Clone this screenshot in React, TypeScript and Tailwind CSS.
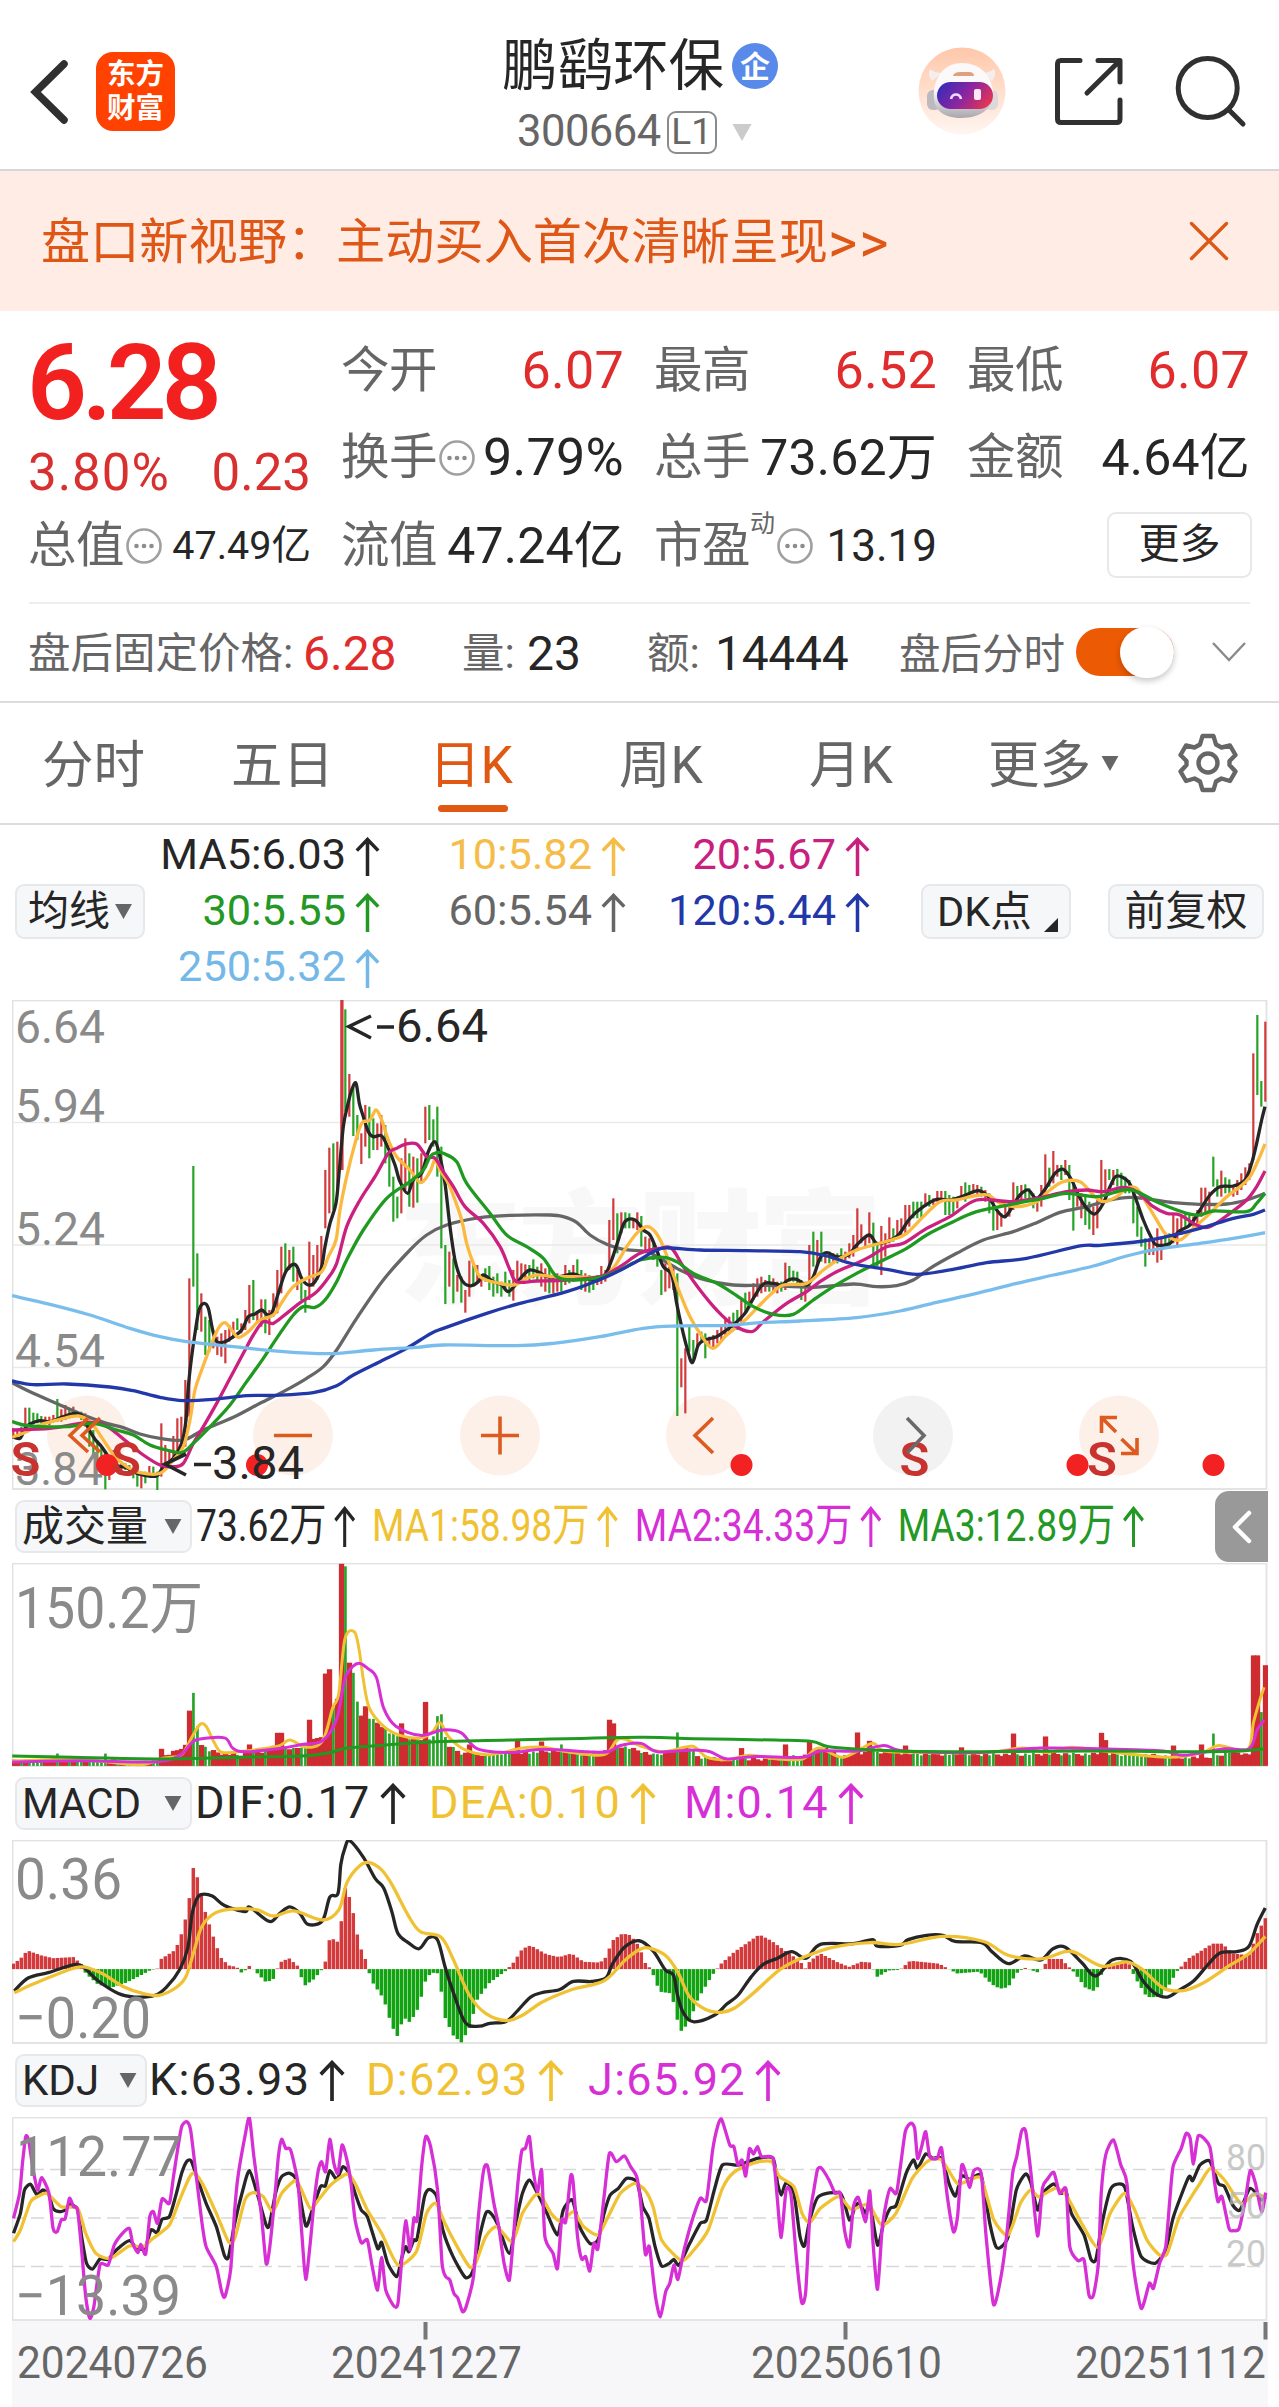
import type { ReactNode } from "react";

const UP = "#d23a3c";
const DOWN = "#27a327";
const INK = "#262626";
const GOLD = "#f0c233";
const PINK = "#d62fd6";

type Point = [number, number];

const parse = (data: string): Point[] =>
  data
    .trim()
    .split(/\s+/)
    .map((pair) => pair.split(",").map(Number) as Point);

// Catmull-Rom spline through the points, with a soft tension
const curve = (data: string, tension = 6) => {
  const p = parse(data);
  let d = `M${p[0][0]} ${p[0][1]}`;
  for (let i = 0; i < p.length - 1; i++) {
    const a = p[i - 1] ?? p[i];
    const b = p[i];
    const c = p[i + 1];
    const e = p[i + 2] ?? c;
    d += `C${b[0] + (c[0] - a[0]) / tension} ${b[1] + (c[1] - a[1]) / tension} ${
      c[0] - (e[0] - b[0]) / tension
    } ${c[1] - (e[1] - b[1]) / tension} ${c[0]} ${c[1]}`;
  }
  return d;
};

const lerp = (points: Point[], x: number) => {
  if (x <= points[0][0]) return points[0][1];
  for (let i = 1; i < points.length; i++) {
    if (x <= points[i][0]) {
      const [x0, y0] = points[i - 1];
      const [x1, y1] = points[i];
      return y0 + ((y1 - y0) * (x - x0)) / (x1 - x0);
    }
  }
  return points[points.length - 1][1];
};

// One entry per trading day: r = up, g = down, then high-low
const candles = `
r1345-1375 r1350-1378 g1340-1365 r1283-1345 g1283-1335 g1298-1330 g1300-1330 g1308-1335 r1310-1330 r1310-1335
r1305-1325 g1257-1325 r1288-1325 r1275-1320 g1290-1315 r1280-1310 g1295-1310 g1295-1320 r1300-1340 g1310-1400
g1350-1430 g1380-1450 g1400-1480 g1420-1528 r1440-1500 r1410-1465 g1430-1470 r1445-1475 g1450-1470 g1455-1475
g1465-1495 g1470-1520 r1475-1525 g1475-1510 r1458-1490 g1460-1490 g1475-1530 r1330-1490 r1395-1450 r1410-1440
r1368-1440 r1315-1430 r1310-1430 r1200-1400 r895-1310 g558-920 g820-1050 r940-1055 g1010-1125 g1020-1115
r1080-1105 r1070-1125 r1060-1130 r1050-1150 r1035-1085 r1025-1075 g1015-1050 r1030-1060 r990-1050 r915-1030
g900-1020 r1000-1030 r958-1040 g958-1060 r990-1065 r940-1010 r870-1000 r800-940 g790-880 r810-870
g800-905 r870-930 g900-960 g930-998 r785-960 r825-920 r795-900 r768-880 r570-745 r503-700
g490-690 r485-640 r60-570 g88-395 r282-410 g320-468 g405-480 r460-552 r375-500 g380-535
g415-510 r430-510 r405-500 g435-550 g510-620 g590-725 g650-715 r535-700 r475-630 g520-680
r530-683 g535-668 r520-610 r380-490 g375-480 g418-500 g380-590 g500-805 g795-972 r815-920
g835-970 r885-935 g890-968 r930-998 r842-950 g850-920 r855-905 r890-920 g865-905 g858-930
g890-950 g880-940 g905-950 g875-925 g900-950 r870-962 r842-900 r850-900 r853-895 g855-900
g838-895 g860-900 r850-920 r865-935 g860-940 r890-940 r880-935 g890-935 r855-915 g870-910
r855-905 g838-900 g870-930 r880-935 g885-938 g890-930 r885-915 r858-912 r870-905 r720-880
r655-780 g700-820 r697-760 g697-745 g700-745 r715-745 r697-750 g708-800 r770-815 r775-810
g790-840 g830-860 g870-945 r850-935 r860-925 r865-930 g880-1308 r1135-1222 r1105-1300 g1040-1115
g1080-1140 r1060-1100 g1055-1085 g1060-1135 r1070-1095 r1065-1105 r1050-1090 r1040-1080 r1015-1065 r1010-1060
g998-1045 g990-1050 r960-1030 g938-1000 r935-985 r910-960 r895-950 r890-940 r900-935 g885-935
r895-935 r905-940 g905-935 r848-930 g858-905 g872-905 g875-920 g900-960 r905-965 r795-930
g755-860 r780-850 g755-845 r820-850 g815-850 r820-850 g820-850 g805-845 r815-840 r790-835
r765-830 r685-810 r733-790 r770-800 r697-790 g728-855 g790-860 r738-885 r760-830 r712-790
g745-785 r720-770 r715-765 r675-760 r675-740 g665-715 g665-715 g665-712 r640-680 g645-680
r655-675 r633-665 r633-665 g633-705 g645-705 g650-700 r655-685 r618-660 g607-665 g615-650
r612-640 r615-645 g620-650 r630-665 g640-700 g660-752 r695-750 r700-740 r680-715 r665-710
r607-690 g618-665 r615-660 g613-655 g625-660 g640-685 r650-695 r615-680 r523-640 g563-620
r513-610 r555-590 g555-600 r540-585 g555-660 g610-752 r630-680 r640-715 g650-735 g665-748
r680-765 r660-745 r540-660 r568-640 g567-600 r570-615 g567-620 g578-625 g590-640 g600-640
g630-730 g680-770 g740-800 g775-860 r775-825 r780-825 r745-848 r770-840 g765-800 g760-800
r700-790 r715-795 r705-765 g700-740 g705-740 r710-740 r690-735 r623-710 r623-700 r635-690
g530-620 g598-650 r572-650 g592-640 g598-640 r620-650 r600-645 r580-630 r562-615 r550-600
r220-540 g105-345 g303-380 r125-365`
  .trim()
  .split(/\s+/)
  .map((item, i) => {
    const [top, bottom] = item.slice(1).split("-").map(Number);
    return { x: 40 + i * 12, top, bottom, up: item[0] === "r" };
  });

const averages = [
  {
    color: "#666666",
    data: "36,1208 100,1240 180,1275 250,1305 320,1330 370,1343 420,1362 480,1375 550,1380 610,1350 700,1312 780,1270 850,1235 920,1195 970,1160 1010,1110 1070,1015 1150,900 1230,810 1280,765 1340,735 1440,713 1530,706 1650,705 1690,710 1730,727 1770,765 1820,793 1870,808 1940,815 1980,835 2040,870 2100,895 2200,915 2300,916 2440,922 2560,912 2630,920 2690,917 2740,900 2790,865 2870,820 2950,780 3040,755 3110,728 3180,697 3260,680 3330,660 3390,652 3450,658 3520,668 3600,673 3680,672 3740,660 3795,640",
  },
  {
    color: INK,
    data: "36,1370 60,1375 75,1345 90,1332 120,1322 150,1325 190,1310 225,1300 250,1310 265,1345 285,1378 305,1400 325,1430 345,1455 380,1463 410,1480 430,1485 470,1488 490,1460 520,1435 545,1390 558,1320 565,1220 575,1130 585,1060 597,990 612,970 625,985 638,1050 650,1085 675,1085 700,1070 725,1050 745,1010 765,1002 785,990 800,1003 815,1000 835,940 855,880 875,855 890,858 905,895 925,915 945,905 965,860 975,800 990,730 1008,670 1018,570 1030,440 1042,380 1055,330 1068,310 1078,370 1090,410 1105,455 1120,470 1145,468 1165,505 1185,555 1200,605 1223,640 1240,600 1265,580 1285,515 1305,485 1320,530 1335,610 1350,740 1365,840 1380,890 1395,912 1415,917 1435,905 1450,885 1480,905 1505,915 1525,935 1550,910 1570,885 1590,870 1620,878 1640,890 1680,890 1720,882 1755,895 1790,902 1815,885 1835,840 1855,780 1875,725 1905,720 1930,750 1950,765 1970,810 1990,860 2015,885 2030,970 2045,1040 2060,1100 2077,1148 2095,1095 2115,1080 2150,1070 2180,1050 2205,1030 2235,1000 2260,955 2290,912 2320,910 2345,915 2365,900 2390,898 2420,915 2440,890 2460,835 2480,818 2510,830 2545,825 2570,795 2607,765 2630,790 2660,785 2695,765 2730,715 2770,680 2810,658 2850,660 2890,648 2935,632 2965,650 2990,690 3015,710 3040,675 3060,645 3085,630 3110,655 3140,620 3165,580 3190,568 3215,600 3235,645 3260,685 3285,702 3310,670 3330,620 3350,588 3385,605 3405,650 3430,720 3455,775 3470,795 3510,790 3535,755 3570,735 3600,690 3630,645 3660,620 3700,618 3735,600 3755,550 3770,490 3785,420 3795,380",
  },
  {
    color: "#fbb940",
    data: "36,1372 80,1355 120,1335 180,1318 235,1308 270,1325 290,1350 320,1395 345,1430 380,1460 420,1478 480,1480 520,1440 550,1400 570,1320 585,1230 605,1170 635,1090 655,1045 675,1028 695,1050 715,1072 745,1055 780,1020 820,1005 850,960 880,920 920,895 965,875 985,830 1008,780 1020,690 1040,590 1065,490 1085,430 1110,420 1128,390 1145,420 1165,480 1190,530 1230,570 1262,608 1290,575 1305,540 1320,570 1345,610 1365,660 1385,720 1400,790 1420,850 1440,890 1475,905 1540,915 1580,895 1610,885 1660,890 1730,890 1790,892 1820,885 1850,850 1880,800 1910,760 1940,740 1965,755 1990,800 2015,870 2040,940 2070,1010 2100,1060 2138,1105 2180,1065 2230,1025 2270,985 2310,945 2350,915 2420,910 2470,870 2520,835 2570,810 2620,795 2680,778 2720,760 2770,710 2820,665 2870,660 2920,648 2965,645 3000,670 3050,680 3110,665 3150,630 3190,605 3240,605 3280,645 3310,665 3350,650 3380,625 3410,625 3440,670 3470,720 3500,765 3540,780 3580,745 3630,700 3680,650 3720,620 3750,590 3775,540 3795,492",
  },
  {
    color: "#cc2080",
    data: "36,1350 150,1345 240,1330 290,1328 330,1345 380,1385 430,1425 480,1455 520,1460 550,1450 580,1390 610,1340 650,1270 690,1195 730,1120 760,1065 790,1025 820,1030 860,1000 905,965 945,940 980,900 1010,850 1040,740 1080,660 1125,590 1165,520 1190,505 1215,493 1250,492 1280,530 1305,535 1330,575 1360,620 1395,680 1450,730 1500,800 1530,870 1550,905 1610,903 1700,900 1800,890 1860,860 1920,820 1980,805 2015,805 2050,860 2100,930 2150,990 2200,1035 2255,1055 2290,1025 2360,970 2420,935 2460,905 2510,875 2570,850 2610,830 2660,800 2710,790 2780,745 2850,710 2930,660 3030,665 3110,655 3200,635 3260,630 3310,635 3370,622 3410,635 3460,680 3500,700 3540,705 3590,735 3630,740 3690,700 3740,660 3770,620 3795,573",
  },
  {
    color: "#1f991f",
    data: "36,1325 90,1338 200,1340 280,1330 350,1350 400,1365 450,1395 500,1410 545,1418 580,1390 640,1330 690,1275 740,1205 790,1135 840,1060 880,1005 910,980 945,982 975,960 1010,905 1040,840 1090,750 1160,655 1230,605 1270,570 1290,530 1310,518 1330,520 1370,545 1400,610 1470,700 1520,765 1580,800 1630,835 1670,890 1720,900 1800,892 1860,870 1920,840 1990,832 2030,845 2080,880 2150,910 2200,940 2260,980 2320,1003 2380,1003 2440,960 2500,920 2570,880 2640,845 2720,805 2780,765 2850,730 2930,695 3050,670 3130,655 3200,640 3290,650 3370,630 3410,635 3480,670 3560,700 3600,705 3640,693 3740,695 3770,670 3795,640",
  },
  {
    color: "#2338a8",
    data: "36,1203 100,1214 200,1212 330,1221 400,1232 480,1252 550,1262 640,1258 740,1247 830,1246 940,1238 1010,1217 1060,1185 1140,1145 1220,1105 1290,1062 1330,1045 1460,1000 1560,970 1700,935 1820,890 1900,850 1970,810 2010,804 2100,810 2240,812 2400,815 2480,828 2560,852 2660,868 2750,883 2850,870 2960,848 3080,835 3240,798 3300,796 3430,783 3500,770 3600,745 3700,715 3760,703 3795,690",
  },
  {
    color: "#78bdec",
    data: "36,947 150,973 270,1005 390,1045 480,1070 560,1085 700,1100 850,1115 990,1121 1120,1110 1250,1102 1330,1095 1550,1097 1660,1090 1800,1070 1930,1045 2030,1038 2180,1036 2280,1028 2400,1023 2570,1013 2700,993 2810,967 2930,940 3050,910 3160,885 3280,858 3380,828 3470,808 3600,790 3700,775 3795,758",
  },
];

const volumeBase = parse(
  "30,742 130,738 250,738 330,746 380,740 430,715 450,700 490,690 510,712 540,720 580,725 640,715 680,700 720,710 760,690 790,670 820,590 850,500 865,505 880,610 900,620 930,640 960,670 1000,680 1060,680 1080,650 1100,700 1130,720 1200,725 1250,715 1300,720 1370,715 1450,725 1480,715 1520,700 1570,715 1600,725 1690,705 1710,730 1780,740 1900,735 1980,725 2010,700 2060,730 2130,715 2250,722 2400,724 2600,722 2800,724 2950,735 3020,715 3060,725 3091,600",
);

const volumeSpikes = parse(
  "140,725 258,725 395,712 461,607 473,558 483,650 607,700 676,668 688,668 757,632 795,505 806,493 835,203 846,210 855,475 866,503 893,595 983,642 1040,583 1070,622 1080,617 1148,700 1268,690 1327,692 1375,700 1492,632 1503,642 1659,667 1816,710 1924,700 1982,690 2100,667 2131,690 2216,703 2355,708 2482,670 2560,678 2698,668 2709,688 2874,703 2943,700 2972,670 3070,455 3080,455 3098,482",
);

const volumeLines = [
  {
    color: GOLD,
    data: "30,745 200,742 340,756 400,738 445,728 470,680 490,645 505,650 525,695 545,722 600,718 680,705 710,688 750,708 790,690 815,600 830,560 845,410 868,390 880,440 890,520 905,600 940,650 980,675 1030,682 1060,665 1078,640 1100,680 1140,715 1200,728 1280,710 1330,708 1400,722 1480,728 1510,690 1530,685 1571,705 1626,720 1696,705 1731,735 1781,742 1836,730 1906,740 1966,740 2006,710 2066,735 2136,697 2166,718 2266,722 2416,722 2506,710 2566,722 2626,708 2716,720 2866,735 2946,722 2986,703 3056,715 3071,640 3086,580 3097,543",
  },
  {
    color: PINK,
    data: "30,748 200,745 380,748 440,730 470,695 490,685 550,682 570,710 600,720 680,712 740,700 790,690 825,630 845,520 865,485 882,477 900,490 922,515 940,600 970,650 1030,675 1085,660 1130,668 1170,712 1250,722 1330,713 1440,720 1490,720 1520,703 1571,697 1610,720 1700,715 1740,720 1781,740 1850,733 1966,735 2010,718 2100,718 2166,703 2216,718 2400,722 2550,710 2700,712 2850,718 2900,730 3000,712 3060,712 3080,660 3097,633",
  },
  {
    color: "#1f991f",
    data: "30,732 200,736 400,740 600,735 740,732 810,722 850,710 960,700 1080,692 1250,688 1566,680 1700,684 1900,688 1990,692 2040,708 2200,718 2400,720 2700,718 2900,720 3040,718 3097,712",
  },
];

const histogram = parse(
  "30,1305 50,1290 60,1275 70,1268 100,1280 130,1288 180,1285 200,1305 210,1330 240,1360 270,1370 310,1355 345,1335 370,1320 385,1318 395,1290 430,1265 450,1205 463,1130 474,1037 485,1070 500,1150 520,1220 540,1285 560,1308 580,1312 590,1328 603,1320 612,1308 622,1320 650,1352 668,1350 685,1300 708,1288 730,1310 745,1365 770,1345 788,1320 800,1290 808,1230 830,1245 846,1095 860,1130 880,1250 895,1290 910,1350 940,1400 960,1475 975,1505 988,1450 1005,1465 1025,1425 1045,1340 1060,1328 1075,1330 1090,1450 1110,1500 1130,1520 1150,1480 1170,1400 1200,1355 1240,1322 1258,1300 1280,1262 1300,1253 1340,1278 1370,1285 1400,1275 1430,1298 1470,1300 1485,1285 1500,1240 1525,1220 1545,1225 1566,1255 1580,1300 1595,1318 1616,1380 1645,1385 1660,1460 1670,1490 1690,1460 1710,1400 1745,1335 1765,1305 1800,1270 1860,1223 1890,1240 1920,1265 1960,1295 1972,1318 1985,1295 2010,1275 2050,1298 2080,1312 2110,1298 2133,1300 2140,1320 2150,1340 2175,1322 2205,1320 2230,1295 2300,1303 2320,1315 2345,1330 2400,1325 2430,1360 2450,1372 2470,1368 2490,1330 2510,1314 2545,1328 2570,1290 2600,1290 2617,1310 2630,1325 2660,1370 2685,1380 2705,1310 2765,1300 2780,1340 2810,1395 2840,1395 2860,1370 2885,1322 2895,1310 2910,1290 2940,1270 2970,1248 2995,1248 3020,1275 3060,1280 3080,1220 3100,1178",
);

const macdLines = [
  {
    color: INK,
    data: "35,1378 70,1342 120,1327 185,1305 210,1318 240,1350 290,1385 330,1395 380,1390 410,1365 440,1320 460,1260 470,1170 480,1130 492,1113 520,1117 550,1143 600,1160 612,1148 660,1187 685,1165 710,1147 735,1165 755,1195 790,1185 808,1120 828,1110 835,1030 845,985 857,965 890,1010 920,1070 940,1095 960,1160 975,1220 1000,1245 1027,1262 1050,1232 1072,1238 1090,1310 1110,1380 1140,1465 1175,1475 1200,1467 1240,1462 1270,1430 1300,1395 1330,1382 1370,1375 1405,1352 1450,1352 1485,1342 1500,1305 1530,1258 1566,1240 1600,1268 1630,1320 1650,1335 1660,1390 1675,1440 1700,1463 1750,1445 1780,1415 1808,1390 1840,1340 1870,1305 1905,1288 1940,1270 1975,1288 2010,1250 2090,1248 2138,1237 2150,1255 2205,1253 2225,1237 2270,1225 2310,1225 2340,1242 2405,1245 2430,1270 2470,1303 2510,1282 2550,1293 2580,1262 2610,1258 2650,1300 2685,1337 2725,1293 2770,1297 2800,1350 2830,1385 2860,1395 2890,1375 2925,1350 2960,1305 2990,1273 3030,1270 3060,1255 3080,1195 3100,1150",
  },
  {
    color: GOLD,
    data: "35,1383 80,1360 140,1332 200,1312 250,1330 300,1365 350,1385 390,1390 430,1370 455,1340 475,1270 495,1200 530,1162 580,1152 630,1155 670,1172 720,1158 790,1183 830,1155 850,1080 880,1035 905,1025 935,1045 960,1085 1000,1170 1030,1215 1080,1230 1110,1290 1150,1390 1190,1440 1240,1460 1280,1445 1330,1408 1400,1375 1480,1350 1530,1295 1566,1265 1590,1260 1630,1280 1660,1325 1690,1395 1730,1430 1766,1437 1800,1425 1850,1380 1910,1320 1970,1285 2040,1258 2133,1245 2205,1250 2310,1228 2410,1242 2470,1280 2550,1290 2610,1270 2640,1275 2700,1310 2760,1298 2800,1320 2850,1370 2900,1377 2950,1355 3010,1310 3060,1275 3100,1228",
  },
];

const kdjLines = [
  {
    color: INK,
    data: "33,550 50,490 60,420 75,403 90,433 105,420 120,435 130,475 145,485 160,480 170,463 190,478 200,560 212,640 227,657 245,627 265,628 285,600 317,572 335,595 355,595 370,540 385,548 397,508 415,500 430,440 445,370 457,335 468,332 482,380 505,460 530,530 550,617 560,620 575,520 595,420 611,362 630,430 652,525 660,525 675,430 690,380 710,370 728,395 749,527 765,480 785,410 797,408 808,362 825,388 840,350 855,370 870,430 885,480 900,500 925,595 935,577 950,640 972,680 985,620 994,590 1002,605 1014,570 1022,565 1040,440 1052,418 1070,440 1085,540 1110,620 1140,682 1158,665 1175,560 1190,490 1200,487 1218,520 1248,610 1265,510 1280,430 1297,390 1317,430 1340,490 1366,555 1380,480 1402,450 1420,530 1445,580 1465,570 1480,490 1495,435 1515,415 1535,385 1560,395 1575,470 1590,505 1605,590 1621,648 1640,640 1651,628 1664,645 1690,580 1716,520 1731,510 1750,420 1770,345 1810,345 1856,325 1894,325 1905,400 1914,435 1926,398 1945,430 1960,560 1971,588 1984,510 2005,440 2059,430 2081,510 2095,470 2105,460 2121,490 2131,460 2150,585 2165,520 2181,475 2196,465 2220,370 2238,330 2248,355 2268,312 2285,325 2307,325 2325,400 2341,438 2356,378 2376,388 2404,378 2425,520 2440,590 2452,592 2470,560 2490,420 2513,372 2526,400 2542,480 2555,430 2582,402 2600,430 2612,425 2625,490 2656,555 2673,628 2685,628 2700,520 2720,420 2735,403 2756,412 2775,530 2796,620 2830,640 2856,600 2875,500 2912,382 2922,392 2940,345 2964,333 2985,400 3000,410 3020,465 3038,480 3063,415 3091,450 3101,440",
  },
  {
    color: GOLD,
    data: "33,575 50,540 75,455 95,438 115,430 150,470 190,475 210,550 235,610 270,625 317,588 350,590 375,565 415,525 440,450 465,380 478,370 500,410 530,490 560,575 575,565 600,450 620,428 645,440 668,485 690,430 722,392 735,410 760,475 780,450 810,405 850,372 870,400 900,480 935,550 975,645 1020,605 1045,490 1068,460 1090,520 1120,590 1150,650 1165,640 1190,560 1217,530 1255,575 1280,490 1310,437 1325,435 1350,490 1375,515 1405,485 1430,530 1465,555 1490,500 1520,430 1555,400 1580,420 1600,470 1621,570 1670,632 1700,600 1735,540 1770,415 1800,365 1850,338 1890,335 1910,380 1945,410 1965,490 1984,518 2010,475 2055,440 2085,478 2110,468 2130,465 2160,525 2195,490 2235,385 2275,332 2307,330 2345,400 2376,390 2404,385 2435,510 2470,555 2500,460 2525,420 2545,440 2586,415 2612,435 2650,520 2690,592 2720,490 2755,430 2780,480 2810,570 2841,615 2860,610 2890,500 2940,400 2966,355 3000,390 3040,460 3070,435 3101,440",
  },
  {
    color: PINK,
    data: "33,505 48,430 55,340 63,260 70,270 80,350 92,420 102,383 120,430 130,535 140,545 150,510 160,505 170,445 180,470 190,480 200,600 210,740 220,805 230,770 245,645 265,645 280,585 300,550 317,535 325,580 338,608 345,583 357,612 367,500 376,485 386,520 397,447 415,460 425,380 435,300 445,230 457,215 467,240 480,370 495,520 505,590 530,650 543,725 551,740 565,660 575,480 583,380 600,260 611,203 622,320 640,490 652,640 660,600 672,460 682,320 690,268 700,295 712,300 730,400 740,560 749,688 760,580 770,450 780,360 788,335 798,365 808,268 818,340 828,370 838,285 850,330 860,400 870,510 885,578 900,570 912,650 925,720 935,622 945,720 965,768 975,760 985,620 994,512 1005,600 1014,505 1022,510 1033,350 1043,260 1055,290 1072,420 1083,640 1092,680 1102,690 1112,730 1122,745 1133,785 1142,770 1160,680 1172,500 1185,360 1195,350 1210,460 1222,530 1235,640 1248,690 1258,560 1268,410 1278,305 1287,295 1297,260 1305,350 1317,425 1327,360 1335,560 1355,610 1366,655 1376,510 1386,515 1398,380 1404,395 1415,560 1425,627 1435,620 1445,663 1455,580 1465,595 1480,440 1493,310 1510,335 1530,318 1545,350 1560,380 1569,450 1581,612 1591,590 1606,740 1618,800 1631,725 1641,700 1651,645 1661,688 1676,600 1696,510 1716,445 1731,450 1746,300 1758,230 1768,208 1788,285 1798,290 1808,345 1818,330 1827,378 1836,297 1846,312 1856,290 1866,320 1894,325 1904,440 1914,562 1926,420 1938,435 1951,620 1964,757 1974,725 1984,500 1994,420 2003,358 2013,355 2031,390 2046,430 2059,430 2069,540 2081,590 2091,470 2103,443 2121,515 2131,423 2139,580 2150,718 2161,540 2171,460 2181,415 2196,430 2206,350 2218,245 2231,220 2241,235 2248,325 2258,290 2268,245 2278,320 2296,325 2307,295 2321,440 2336,545 2346,500 2356,347 2366,370 2376,412 2386,362 2404,370 2416,560 2434,763 2451,690 2466,560 2481,370 2491,320 2503,243 2513,245 2526,370 2542,558 2554,415 2566,388 2582,367 2596,430 2612,418 2621,590 2641,632 2656,630 2668,735 2679,735 2691,640 2698,430 2709,315 2728,270 2746,345 2761,400 2776,640 2796,775 2816,700 2826,715 2841,640 2856,590 2866,450 2874,350 2894,295 2906,250 2916,265 2924,342 2936,257 2964,290 2976,400 2984,455 2994,440 3011,535 3021,542 3036,535 3051,450 3063,362 3076,400 3091,485 3101,428",
  },
];

const Lines = ({ items, width = 3.3, tension = 6 }: { items: { color: string; data: string }[]; width?: number; tension?: number }) => (
  <g fill="none" strokeWidth={width} strokeLinejoin="round">
    {items.map((line) => (
      <path key={line.color} d={curve(line.data, tension)} stroke={line.color} vectorEffect="non-scaling-stroke" />
    ))}
  </g>
);

const Frame = ({ y, height }: { y: number; height: number }) => (
  <rect x="12.5" y={y} width="1254" height={height} fill="none" stroke="#e2e2e2" strokeWidth="1.8" />
);

const Label = ({ x, y, width, size = 46, fill = "#8a8a8a", children }: { x: number; y: number; width: number; size?: number; fill?: string; children: string }) => (
  <text x={x} y={y} textLength={width} lengthAdjust="spacingAndGlyphs" fontSize={size} fill={fill}>
    {children}
  </text>
);

const Arrow = ({ className }: { className: string }) => (
  <svg className={`shrink-0 ${className}`} viewBox="0 0 24 40" fill="none" stroke="currentColor" strokeWidth="3.6">
    <path d="M12 40V3M1 14L12 2.5L23 14" />
  </svg>
);

const Caret = ({ className }: { className: string }) => (
  <svg className={`shrink-0 ${className}`} viewBox="0 0 18 16" fill="currentColor">
    <path d="M0 0h18L9 16z" />
  </svg>
);

const InfoDot = () => (
  <svg className="ml-[2px] h-[36px] w-[36px] shrink-0" viewBox="0 0 36 36" fill="none">
    <circle cx="18" cy="18" r="16.5" stroke="#a0a0a0" strokeWidth="2.6" />
    <g fill="#8c8c8c">
      <circle cx="10.5" cy="18" r="2.3" />
      <circle cx="18" cy="18" r="2.3" />
      <circle cx="25.5" cy="18" r="2.3" />
    </g>
  </svg>
);

const Header = () => (
  <header className="relative flex h-[171px] shrink-0 items-start border-b-2 border-[#d6d6d6]">
    <svg className="ml-[28px] mt-[56px] h-[72px] w-[44px]" viewBox="0 0 44 72" fill="none" stroke="#303030" strokeWidth="7.5" strokeLinecap="round">
      <path d="M36 8L7.5 36L36 64" />
    </svg>
    <div className="ml-[24px] mt-[52px] flex h-[79px] w-[79px] flex-col items-center justify-center rounded-[17px] bg-[#ff4200] text-[28.5px] font-bold leading-[34px] text-white">
      <span>东方</span>
      <span>财富</span>
    </div>

    <div className="absolute left-[502px] top-[33px] flex flex-col text-[#262626]">
      <div className="flex h-[62px] items-center">
        <h1 className="mt-[5px] text-[55.5px] leading-[62px]">鹏鹞环保</h1>
        <span className="ml-[8px] mt-[4px] flex h-[46px] w-[46px] items-center justify-center rounded-full bg-[#5a8ae9] text-[30px] font-bold text-white">
          企
        </span>
      </div>
      <div className="ml-[15px] mt-[15px] flex h-[44px] items-center text-[#666]">
        <span className="text-[43.5px] leading-[44px] tracking-[-0.5px]">300664</span>
        <span className="ml-[6px] flex h-[43px] w-[50px] items-center justify-center rounded-[9px] border-2 border-[#8c8c8c] text-[37px]">
          L1
        </span>
        <Caret className="ml-[12px] h-[17px] w-[26px] text-[#cbcbcb]" />
      </div>
    </div>

    <svg className="ml-auto mr-[47px] mt-[47px] h-[88px] w-[88px]" viewBox="0 0 88 88" fill="none">
      <defs>
        <linearGradient id="halo" x1="0" y1="0" x2="0" y2="1">
          <stop offset="0" stopColor="#ffc7a9" />
          <stop offset="1" stopColor="#fff6f1" />
        </linearGradient>
        <linearGradient id="visor" x1="0" y1="0.3" x2="1" y2="0.7">
          <stop offset="0" stopColor="#3a2bb8" />
          <stop offset="0.5" stopColor="#8d25a0" />
          <stop offset="1" stopColor="#e8364e" />
        </linearGradient>
        <linearGradient id="shell" x1="0" y1="0" x2="0" y2="1">
          <stop offset="0.5" stopColor="#fbf9fa" />
          <stop offset="1" stopColor="#aaa6ad" />
        </linearGradient>
      </defs>
      <circle cx="44" cy="44" r="43.5" fill="url(#halo)" />
      <path d="M14 34Q9 27 12 22Q17 26 24 26zM74 34Q79 27 76 22Q71 26 64 26z" fill="#f6eeec" />
      <rect x="9" y="43" width="14" height="20" rx="6" fill="#bdb9c0" />
      <rect x="66" y="43" width="14" height="20" rx="6" fill="#dcd8dc" />
      <path d="M44 16C61 16 73 27 75 44C77 60 64 71 43 71C24 71 14 62 16 44C18 27 28 16 44 16z" fill="url(#shell)" />
      <path d="M35 29Q36 25 42 25H51Q56 25 56 29z" fill="#dda27d" />
      <rect x="19" y="35" width="56" height="27" rx="13.5" fill="url(#visor)" />
      <path d="M33 52Q34 47.5 38 47.5Q42 47.5 43 52" stroke="#eedcff" strokeWidth="2.6" />
      <rect x="56" y="42" width="7" height="11" rx="2" fill="#ffe8f4" />
    </svg>
    <svg className="mr-[48px] mt-[56px] h-[72px] w-[72px]" viewBox="0 0 72 72" fill="none" stroke="#303030" strokeWidth="5" strokeLinecap="round" strokeLinejoin="round">
      <path d="M27 4.5H8Q4.500 4.500 4.500 8V63Q4.500 66.500 8 66.500H63.500Q67 66.500 67 63V44" />
      <path d="M45 4.500H67V26M66 5.500L34 37" />
    </svg>
    <svg className="mr-[32px] mt-[54px] h-[74px] w-[74px]" viewBox="0 0 74 74" fill="none" stroke="#303030" strokeWidth="5" strokeLinecap="round">
      <circle cx="34.7" cy="34" r="29.5" />
      <path d="M56 56L70 70" />
    </svg>
  </header>
);

const Banner = () => (
  <div className="flex h-[140px] shrink-0 items-center bg-[#ffece5] pl-[41px] text-[#df5716]">
    <span className="mt-[4px] text-[49.2px]">盘口新视野：主动买入首次清晰呈现</span>
    <span className="mt-[3px] text-[56px] tracking-[2px]">&gt;&gt;</span>
    <svg className="ml-auto mr-[50px] h-[40px] w-[40px]" viewBox="0 0 40 40" stroke="currentColor" strokeWidth="3.4" strokeLinecap="round">
      <path d="M2.500 2.500L37.500 37.500M37.500 2.500L2.500 37.500" />
    </svg>
  </div>
);

const Stat = ({
  label,
  value,
  size = "text-[52px] tracking-[0.3px]",
  color = "text-[#262626]",
  dot,
}: {
  label: string;
  value: string;
  size?: string;
  color?: string;
  dot?: boolean;
}) => (
  <div className="flex items-center">
    <span className="-ml-[1px] text-[48.5px] tracking-[-0.5px] text-[#666]">{label}</span>
    {dot && <InfoDot />}
    <span className={`ml-auto whitespace-nowrap ${size} ${color}`}>{value}</span>
  </div>
);

const Quote = () => (
  <section className="flex h-[392px] shrink-0 flex-col border-b-2 border-[#dcdcdc] px-[29px]">
    <div className="mt-[16px] grid h-[264px] grid-cols-4 grid-rows-3 gap-x-[31px] whitespace-nowrap leading-none">
      <div className="row-span-2 flex flex-col">
        <span className="-ml-[2px] mt-[4px] text-[105px] font-semibold leading-[105px] tracking-[-5px] text-[#f32020]">6.28</span>
        <div className="-ml-[1px] mt-[11px] flex justify-between text-[51px] tracking-[1px] text-[#d8302f]">
          <span>3.80%</span>
          <span className="tracking-[0px]">0.23</span>
        </div>
      </div>
      <Stat label="今开" value="6.07" color="text-[#e02c2c]" />
      <Stat label="最高" value="6.52" color="text-[#e02c2c]" />
      <Stat label="最低" value="6.07" color="text-[#e02c2c]" />
      <Stat label="换手" value="9.79%" dot />
      <Stat label="总手" value="73.62万" size="text-[50px] tracking-[0.2px]" />
      <Stat label="金额" value="4.64亿" size="text-[50px] tracking-[0.2px]" />
      <Stat label="总值" value="47.49亿" size="text-[39.5px]" dot />
      <Stat label="流值" value="47.24亿" size="text-[50px] tracking-[0.2px]" />
      <div className="flex items-center">
        <span className="-ml-[1px] text-[48.5px] tracking-[-0.5px] text-[#666]">市盈</span>
        <span className="-mt-[44px] text-[25px] text-[#666]">动</span>
        <InfoDot />
        <span className="ml-auto text-[44px] text-[#262626]">13.19</span>
      </div>
      <div className="flex items-center justify-end">
        <button className="-mr-[2px] -mt-[2px] h-[66px] w-[145px] rounded-[9px] border-2 border-[#e8e8e8] text-[41px] text-[#262626]">更多</button>
      </div>
    </div>
    <div className="mt-[12px] h-[2px] shrink-0 bg-[#eeeeee]" />
    <div className="flex h-[98px] items-center whitespace-nowrap text-[42.5px] leading-none text-[#666]">
      <span className="-ml-[1px] mt-[4px] w-[275px]">盘后固定价格:</span>
      <span className="mt-[3px] w-[159px] text-[48px] text-[#e02c2c]">6.28</span>
      <span className="mt-[4px] w-[65px]">量:</span>
      <span className="mt-[3px] w-[120px] text-[48px] text-[#262626]">23</span>
      <span className="mt-[4px] w-[68px]">额:</span>
      <span className="mt-[3px] w-[184px] text-[48px] tracking-[-0.3px] text-[#262626]">14444</span>
      <span className="mt-[4px] w-[177px] text-[41.5px]">盘后分时</span>
      <span className="flex h-[48px] w-[98px] items-center justify-end rounded-full bg-[#ec5a04]">
        <span className="h-[51px] w-[54px] shrink-0 rounded-full bg-white shadow-[0_3px_6px_rgba(0,0,0,0.22)]" />
      </span>
      <svg className="ml-[37px] h-[22px] w-[36px]" viewBox="0 0 36 22" fill="none" stroke="#8a8a8a" strokeWidth="2.4">
        <path d="M2 2L18 19L34 2" />
      </svg>
    </div>
  </section>
);

const Tabs = () => (
  <nav className="flex h-[122px] shrink-0 items-center whitespace-nowrap border-b-2 border-[#dcdcdc] pl-[42px] text-[51.5px] leading-none text-[#666]">
    <span className="mt-[5px] w-[189px]">分时</span>
    <span className="mt-[5px] w-[198px]">五日</span>
    <span className="relative mt-[5px] w-[190px] text-[#e05812]">
      日K
      <span className="absolute -bottom-[21px] left-[9px] h-[7px] w-[70px] rounded-full bg-[#e05812]" />
    </span>
    <span className="mt-[5px] w-[190px]">周K</span>
    <span className="mt-[5px] w-[179px]">月K</span>
    <span className="mt-[5px]">更多</span>
    <Caret className="ml-[10px] h-[15px] w-[18px]" />
    <svg className="ml-[58px] h-[62px] w-[62px]" viewBox="0 0 62 62" fill="none" stroke="currentColor" strokeWidth="4.4" strokeLinejoin="round">
      <path d="M25.500 4H36.500L39 12.500L44.500 15.500L53 13.500L58.500 23L52.500 29V33L58.500 39.500L53 49L44.500 46.500L39 49.500L36.500 58H25.500L23 49.500L17.500 46.500L9 49L3.500 39.500L9.500 33V29L3.500 23L9 13.500L17.500 15.500L23 12.500z" />
      <circle cx="31" cy="31" r="9.5" />
    </svg>
  </nav>
);

const maRows = [
  ["MA5:6.03", "text-[#262626]"],
  ["10:5.82", "text-[#f5bc48]"],
  ["20:5.67", "text-[#c8207e]"],
  ["30:5.55", "text-[#249824]"],
  ["60:5.54", "text-[#666666]"],
  ["120:5.44", "text-[#2338a8]"],
  ["250:5.32", "text-[#74b8e8]"],
];

const Averages = () => (
  <div className="flex h-[175px] shrink-0 items-start leading-none text-[#262626]">
    <button className="ml-[15px] mt-[59px] flex h-[55px] w-[130px] shrink-0 items-center justify-center gap-[5px] rounded-[9px] border-2 border-[#e6e8eb] bg-[#f6f7f9] text-[41px]">
      均线
      <Caret className="h-[15px] w-[17px] text-[#666]" />
    </button>
    <div className="ml-[-11px] grid shrink-0 grid-cols-[246px_246px_244px] pt-[2px] text-[43.3px]">
      {maRows.map(([text, color]) => (
        <span key={text} className={`flex h-[56px] items-center justify-end gap-[9px] whitespace-nowrap ${color}`}>
          {text}
          <Arrow className="mt-[3px] h-[39px] w-[25px]" />
        </span>
      ))}
    </div>
    <button className="ml-[51px] mt-[59px] flex h-[55px] w-[150px] shrink-0 items-center rounded-[9px] border-2 border-[#e6e8eb] bg-[#f6f7f9] pl-[14px] text-[41.5px]">
      DK点
      <svg className="ml-[12px] mt-[27px] h-[14px] w-[14px]" viewBox="0 0 14 14">
        <path d="M14 0V14H0z" fill="#262626" />
      </svg>
    </button>
    <button className="ml-[37px] mt-[59px] h-[55px] w-[156px] shrink-0 rounded-[9px] border-2 border-[#e6e8eb] bg-[#f6f7f9] text-[41px]">前复权</button>
  </div>
);

const tools = [87, 293, 500, 706, 913, 1119];

const PriceChart = () => (
  <svg className="ml-[12px] h-[490px] w-[1256px] shrink-0" viewBox="12 1000 1256 490">
    <text x="398" y="1294" fontSize="124" fontWeight="900" fill="#f8f8f8" textLength="484">
      东方财富
    </text>
    <g stroke="#e9e9e9" strokeWidth="1.4">
      <path d="M12 1122.500H1267M12 1245H1267M12 1367.500H1267" />
    </g>
    <Frame y={1000.5} height={488.5} />
    {tools.map((x) => (
      <circle key={x} cx={x} cy="1435.5" r="40" fill={x === 913 ? "#f2f2f2" : "#fdf0e9"} />
    ))}
    <g transform="translate(0 980) scale(0.33333)">
      {candles.map((c) => (
        <rect key={c.x} x={c.x - 3.3} y={c.top} width={c.top === 60 ? 10 : 6.6} height={c.bottom - c.top} fill={c.up ? UP : DOWN} />
      ))}
      <Lines items={averages} />
    </g>
    <Label x={15} y={1043} width={90}>6.64</Label>
    <Label x={15} y={1122} width={90}>5.94</Label>
    <Label x={15} y={1244.5} width={90}>5.24</Label>
    <Label x={15} y={1367} width={90}>4.54</Label>
    <Label x={15} y={1485} width={88}>3.84</Label>
    <g fill="none" stroke={INK} strokeWidth="3.6">
      <path d="M371 1016L349 1026.500L371 1038M377 1027H394" />
      <path d="M186 1454L165 1464L186 1475M194 1464.500H211" />
    </g>
    <Label x={396} y={1041.5} width={92} size={47} fill={INK}>6.64</Label>
    <g fill="#f22222">
      <circle cx="107" cy="1465" r="11" />
      <circle cx="257" cy="1465" r="11" />
      <circle cx="741.5" cy="1465" r="11" />
      <circle cx="1077.5" cy="1465" r="11" />
      <circle cx="1213.5" cy="1465" r="11" />
    </g>
    <g fontSize="49" fontWeight="600" fill="#c8322f" textAnchor="middle">
      <text x="25.5" y="1475.5">S</text>
      <text x="126" y="1475.5">S</text>
      <text x="914.5" y="1475.5">S</text>
      <text x="1102" y="1475.5">S</text>
    </g>
    <Label x={212} y={1479} width={92} size={47} fill={INK}>3.84</Label>
    <g fill="none" stroke="#dd5b1e" strokeWidth="3.6">
      <path d="M88 1418L70 1435.500L88 1452M100 1418L82 1435.500L100 1452" />
      <path d="M274 1435.500H312" />
      <path d="M481 1435.500H519M500 1416.500V1454.500" />
      <path d="M713 1418L695 1435.500L713 1453" />
      <path d="M907 1418L924 1435.500L907 1453" stroke="#6a6a6a" />
      <path d="M1117 1417.500H1101.500V1433M1102 1418L1116 1432M1121.500 1439L1136 1453M1121 1453.500H1137V1438" />
    </g>
  </svg>
);

const Indicator = ({ name, width, children }: { name: string; width: string; children: ReactNode }) => (
  <div className="relative flex h-[73px] shrink-0 items-center leading-none">
    <button
      className={`ml-[15px] flex h-[53px] shrink-0 items-center justify-between whitespace-nowrap rounded-[9px] border-2 border-[#e6e8eb] bg-[#f6f7f9] pl-[5px] pr-[8px] text-[42px] text-[#262626] ${width}`}
    >
      {name}
      <Caret className="h-[15px] w-[18px] text-[#666]" />
    </button>
    {children}
  </div>
);

const Reading = ({ text, className }: { text: string; className: string }) => (
  <span className={`-mt-[2px] flex shrink-0 items-center gap-[9px] whitespace-nowrap text-[45px] ${className}`}>
    {text}
    <Arrow className="mt-[2px] h-[41px] w-[26px]" />
  </span>
);

const dayX = (i: number) => (40 / 3 + i * 4) * 2.45;

const VolumeChart = () => {
  const bars = candles.map((c, i) => {
    const x = dayX(i);
    const spike = volumeSpikes.find((s) => Math.abs(s[0] - x) < 4.95);
    return { x, top: spike ? spike[1] : lerp(volumeBase, x) + ((i * 7) % 5) * 2, up: c.up || spike?.[1] === 455 };
  });
  return (
    <svg className="ml-[12px] h-[204px] w-[1256px] shrink-0" viewBox="12 1563 1256 204">
      <Frame y={1563.5} height={202.5} />
      <g transform="translate(0 1490) scale(0.40816 0.3635)">
        {bars.filter((b) => b.up).map((b) => (
          <rect key={b.x} x={b.x - 6} y={b.top} width="13" height={759 - b.top} fill="#ce2c30" />
        ))}
        {bars.filter((b) => !b.up).map((b) => (
          <rect key={b.x} x={b.x - 3} y={b.top} width="6.5" height={759 - b.top} fill={DOWN} />
        ))}
        <Lines items={volumeLines} width={3} />
      </g>
      <Label x={15} y={1628} width={188} size={57}>150.2万</Label>
    </svg>
  );
};

const MacdChart = () => (
  <svg className="ml-[12px] h-[204px] w-[1256px] shrink-0" viewBox="12 1840 1256 204">
    <Frame y={1840.5} height={202.5} />
    <g transform="translate(0 1490) scale(0.40816 0.3635)">
      {candles.map((c, i) => {
        const y = lerp(histogram, dayX(i));
        return <rect key={c.x} x={dayX(i) - 4.3} y={Math.min(y, 1318)} width="8.5" height={Math.abs(y - 1318)} fill={y < 1318 ? UP : "#12a312"} />;
      })}
      <Lines items={macdLines} />
    </g>
    <Label x={15} y={1899} width={107} size={58}>0.36</Label>
    <Label x={15} y={2038} width={136} size={58}>−0.20</Label>
  </svg>
);

const KdjChart = () => (
  <svg className="ml-[12px] h-[204px] w-[1256px] shrink-0" viewBox="12 2117 1256 204">
    <Frame y={2117.5} height={202.5} />
    <path d="M12 2169.500H1267M12 2218H1267M12 2266.500H1267" stroke="#d8d8d8" strokeWidth="1.6" strokeDasharray="13 6" />
    <g transform="translate(0 2050) scale(0.40816 0.33333)">
      <Lines items={kdjLines} tension={9} />
    </g>
    <g opacity="0.75">
      <Label x={1226} y={2169.5} width={40} size={37} fill="#b8b8b8">80</Label>
      <Label x={1226} y={2217.5} width={40} size={37} fill="#b8b8b8">50</Label>
      <Label x={1226} y={2266} width={40} size={37} fill="#b8b8b8">20</Label>
    </g>
    <Label x={16} y={2176} width={166} size={55}>112.77</Label>
    <Label x={15} y={2315} width={166} size={55}>−13.39</Label>
  </svg>
);

const DateAxis = () => (
  <svg className="ml-[12px] h-[86px] w-[1256px] shrink-0 bg-[#f7f7fa]" viewBox="12 2321 1256 86">
    <path d="M425.500 2322V2339.500M845.500 2322V2339.500M1265.500 2322V2339.500" stroke="#777" strokeWidth="4" />
    <Label x={17} y={2378} width={191} size={43.5} fill="#666">20240726</Label>
    <Label x={331} y={2378} width={191} size={43.5} fill="#666">20241227</Label>
    <Label x={751} y={2378} width={191} size={43.5} fill="#666">20250610</Label>
    <Label x={1075} y={2378} width={191} size={43.5} fill="#666">20251112</Label>
  </svg>
);

export default function App() {
  return (
    <main className="flex h-[2407px] w-[1279px] flex-col overflow-hidden bg-white font-['Roboto','Noto_Sans_CJK_SC',sans-serif]">
      <Header />
      <Banner />
      <Quote />
      <Tabs />
      <Averages />
      <PriceChart />

      <Indicator name="成交量" width="w-[177px]">
        <div className="ml-[4px] flex origin-left scale-x-[0.826] gap-[20px]">
          <Reading text="73.62万" className="text-[#262626]" />
          <Reading text="MA1:58.98万" className="text-[#f0c233]" />
          <Reading text="MA2:34.33万" className="text-[#d62fd6]" />
          <Reading text="MA3:12.89万" className="text-[#249824]" />
        </div>
        <span className="absolute right-[11px] top-[1px] flex h-[71px] w-[53px] items-center justify-center rounded-l-[14px] bg-[#999]">
          <svg className="h-[36px] w-[22px]" viewBox="0 0 22 36" fill="none" stroke="#fff" strokeWidth="4.5" strokeLinecap="round" strokeLinejoin="round">
            <path d="M18 4L4 18L18 32" />
          </svg>
        </span>
      </Indicator>
      <VolumeChart />

      <Indicator name="MACD" width="w-[177px]">
        <Reading text="DIF:0.17" className="ml-[3px] w-[234px] tracking-[1.3px] text-[#262626]" />
        <Reading text="DEA:0.10" className="w-[255px] tracking-[1.1px] text-[#f0c233]" />
        <Reading text="M:0.14" className="tracking-[1.1px] text-[#d62fd6]" />
      </Indicator>
      <MacdChart />

      <Indicator name="KDJ" width="w-[132px]">
        <Reading text="K:63.93" className="ml-[2px] w-[217px] tracking-[1.3px] text-[#262626]" />
        <Reading text="D:62.93" className="w-[222px] tracking-[1.3px] text-[#f0c233]" />
        <Reading text="J:65.92" className="tracking-[1.3px] text-[#d62fd6]" />
      </Indicator>
      <KdjChart />
      <DateAxis />
    </main>
  );
}
